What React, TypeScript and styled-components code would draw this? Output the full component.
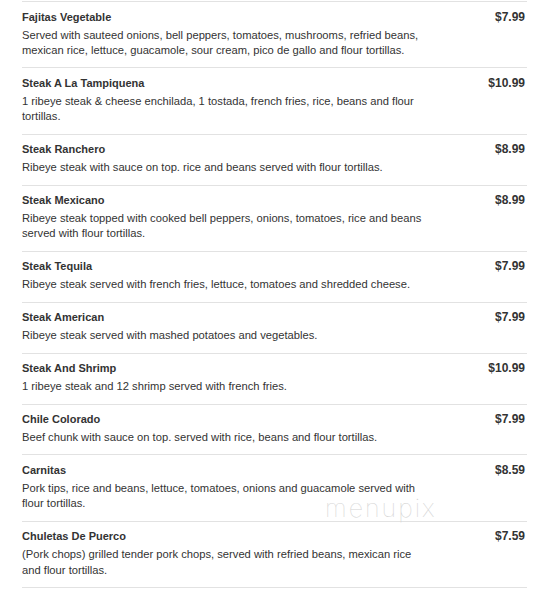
import styled, { createGlobalStyle } from 'styled-components'

const GlobalStyle = createGlobalStyle`
    body {
        margin: 0;
        background: #fff;
        font-family: "Liberation Sans", Arial, sans-serif;
    }
`

const Page = styled.div`
    position: relative;
    padding: 1px 0 0 22px;
`

const List = styled.div`
    width: 505px;
    border-top: 1px solid #e2e2e2;
`

const Row = styled.div`
    display: grid;
    grid-template-columns: 80% 1fr;
    padding: 7.5px 2px 9px 0;
    border-bottom: 1px solid #e2e2e2;
`

const Title = styled.div`
    font-size: 11px;
    font-weight: bold;
    line-height: 15.4px;
    color: #333;
    margin-bottom: 2.6px;
`

const Desc = styled.div`
    font-size: 11.2px;
    line-height: 15.4px;
    color: #333;
`

const Price = styled.div`
    grid-column: 2;
    grid-row: 1;
    text-align: right;
    font-size: 12px;
    font-weight: bold;
    line-height: 15.4px;
    color: #333;
`

const Watermark = styled.div`
    position: absolute;
    left: 325px;
    top: 493px;
    font-family: Inter, "Noto Sans", sans-serif;
    font-weight: 100;
    font-size: 25px;
    letter-spacing: 2px;
    color: #d4d4d4;
    pointer-events: none;
`

const items = [
    { name: 'Fajitas Vegetable', price: '$7.99', desc: 'Served with sauteed onions, bell peppers, tomatoes, mushrooms, refried beans, mexican rice, lettuce, guacamole, sour cream, pico de gallo and flour tortillas.' },
    { name: 'Steak A La Tampiquena', price: '$10.99', desc: '1 ribeye steak & cheese enchilada, 1 tostada, french fries, rice, beans and flour tortillas.' },
    { name: 'Steak Ranchero', price: '$8.99', desc: 'Ribeye steak with sauce on top. rice and beans served with flour tortillas.' },
    { name: 'Steak Mexicano', price: '$8.99', desc: 'Ribeye steak topped with cooked bell peppers, onions, tomatoes, rice and beans served with flour tortillas.' },
    { name: 'Steak Tequila', price: '$7.99', desc: 'Ribeye steak served with french fries, lettuce, tomatoes and shredded cheese.' },
    { name: 'Steak American', price: '$7.99', desc: 'Ribeye steak served with mashed potatoes and vegetables.' },
    { name: 'Steak And Shrimp', price: '$10.99', desc: '1 ribeye steak and 12 shrimp served with french fries.' },
    { name: 'Chile Colorado', price: '$7.99', desc: 'Beef chunk with sauce on top. served with rice, beans and flour tortillas.' },
    { name: 'Carnitas', price: '$8.59', desc: 'Pork tips, rice and beans, lettuce, tomatoes, onions and guacamole served with flour tortillas.' },
    { name: 'Chuletas De Puerco', price: '$7.59', desc: '(Pork chops) grilled tender pork chops, served with refried beans, mexican rice and flour tortillas.' },
]

const App = () => {
    return (
        <Page>
            <GlobalStyle />
            <List>
                {items.map((item) => (
                    <Row key={item.name}>
                        <div>
                            <Title>{item.name}</Title>
                            <Desc>{item.desc}</Desc>
                        </div>
                        <Price>{item.price}</Price>
                    </Row>
                ))}
            </List>
            <Watermark>menupix</Watermark>
        </Page>
    )
}

export default App
